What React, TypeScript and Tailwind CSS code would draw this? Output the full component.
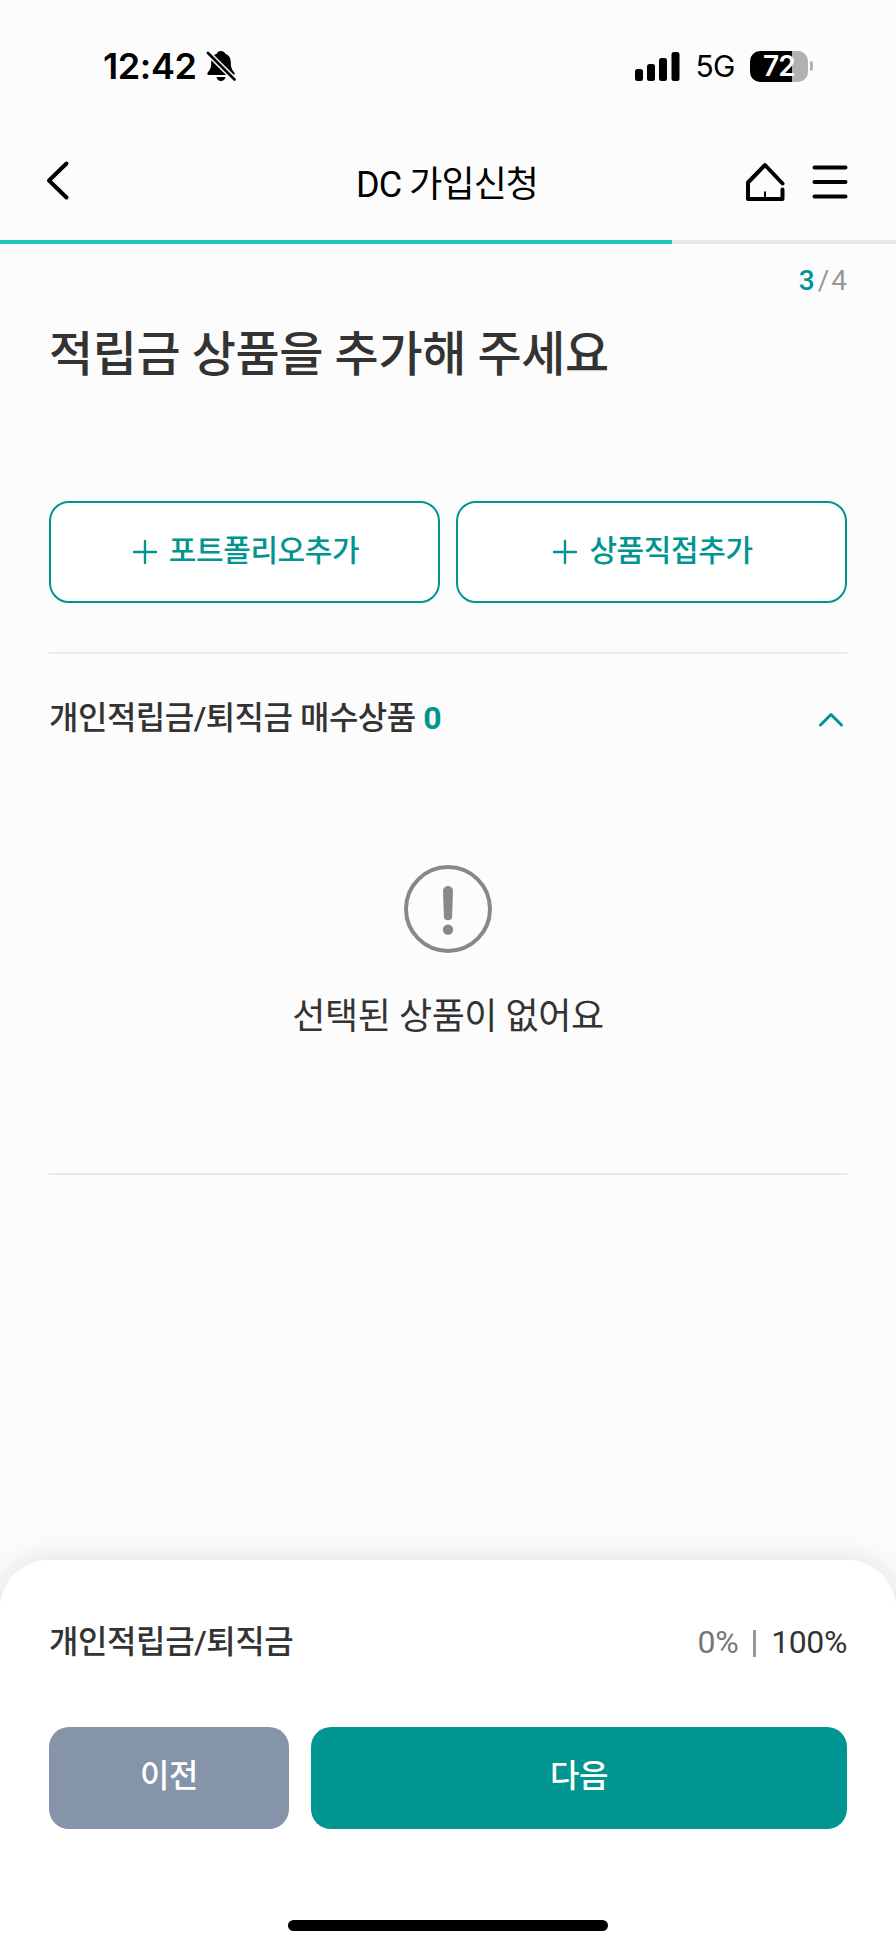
import type { ReactNode } from 'react'

export default function App() {
  return (
    <div className="flex h-[1947px] w-[896px] flex-col overflow-hidden bg-[#fcfcfc] font-[Roboto,'Noto_Sans_CJK_KR',sans-serif] tracking-[-0.4px] text-[#333333]">
      <StatusBar />
      <Header />
      <Progress step={3} total={4} />

      <main className="flex flex-1 flex-col px-[49px]">
        <p className="mt-[19px] flex h-9 items-center justify-end text-[28px] leading-9 tracking-normal text-[#999999]">
          <span className="font-medium text-[#009591]">3</span>
          <span className="mr-[2px] ml-[3px]">/</span>
          <span>4</span>
        </p>

        <h1 className="mt-[20px] text-[48px] leading-[72px] font-medium">
          적립금 상품을 추가해 주세요
        </h1>

        <div className="mt-[110px] grid grid-cols-2 gap-4">
          <AddButton label="포트폴리오추가" />
          <AddButton label="상품직접추가" />
        </div>

        <section className="mt-[49px] flex h-[523px] flex-col border-y-2 border-[#e9eaed]">
          <div className="mt-[40px] flex h-12 items-center justify-between">
            <h2 className="text-[32px] leading-[48px] font-medium tracking-[-0.5px]">
              개인적립금/퇴직금 매수상품 <span className="font-bold text-[#009591]">0</span>
            </h2>
            <svg width="32" height="32" viewBox="0 0 32 32" fill="none" className="mt-1">
              <path d="M5.500 21 16 10.500 26.500 21" stroke="#009591" strokeWidth="3" strokeLinecap="round" strokeLinejoin="round" />
            </svg>
          </div>

          <div className="mt-[123px] flex flex-col items-center">
            <svg width="88" height="88" viewBox="0 0 88 88">
              <circle cx="44" cy="44" r="42" fill="none" stroke="#888888" strokeWidth="4" />
              <path d="M39 26a5 5 0 0 1 10 0l-.9 25.200a4.100 4.100 0 0 1-8.200 0z" fill="#888888" />
              <circle cx="44" cy="64.600" r="5.200" fill="#888888" />
            </svg>
            <p className="mt-[37px] text-[36px] leading-[54px]">선택된 상품이 없어요</p>
          </div>
        </section>
      </main>

      <footer className="flex h-[387px] flex-col rounded-t-[48px] bg-white px-[49px] shadow-[0_0_32px_rgba(0,0,0,0.12)]">
        <div className="mt-[58px] flex h-12 items-center justify-between text-[32px] leading-[48px]">
          <p className="font-medium">개인적립금/퇴직금</p>
          <p className="flex items-center">
            <span className="text-[#777777]">0%</span>
            <span className="mx-[15px] mt-[3px] h-[27px] w-[3px] bg-[#999999]" />
            <span>100%</span>
          </p>
        </div>

        <div className="mt-[61px] flex gap-[22px] text-[32px] leading-[48px] font-medium text-white">
          <button className="h-[102px] w-[240px] rounded-[20px] bg-[#8594a8] pb-1">이전</button>
          <button className="h-[102px] flex-1 rounded-[20px] bg-[#009591] pb-1">다음</button>
        </div>

        <div className="mt-[91px] h-[11px] w-80 self-center rounded-full bg-black" />
      </footer>
    </div>
  )
}

function StatusBar() {
  return (
    <div className="flex h-[132px] items-center justify-between pr-[83px] pl-[103px] font-[Inter,sans-serif] text-black">
      <div className="flex items-center gap-[9px]">
        <span className="text-[36px] leading-[44px] font-semibold tracking-[-0.4px]">12:42</span>
        <BellOff />
      </div>

      <div className="flex items-center">
        <svg width="45" height="29" viewBox="0 0 45 29">
          <rect x="0" y="17" width="8" height="12" rx="2.500" />
          <rect x="12" y="12" width="8" height="17" rx="2.500" />
          <rect x="24" y="6" width="8" height="23" rx="2.500" />
          <rect x="36.500" y="0" width="8" height="29" rx="2.500" />
        </svg>
        <span className="ml-[15px] text-[30px] leading-9 tracking-[-0.5px]">5G</span>
        <div className="ml-[15px] flex items-center gap-[2px]">
          <div className="flex h-[31px] w-[58px] items-center justify-center rounded-[10px] bg-[linear-gradient(to_right,#000_42px,#b0b2b1_42px)]">
            <span className="text-[28px] leading-[31px] font-semibold tracking-[-0.8px] text-white">72</span>
          </div>
          <div className="h-[10px] w-[3px] rounded-r-full bg-[#b0b2b1]" />
        </div>
      </div>
    </div>
  )
}

function BellOff() {
  return (
    <svg width="30" height="32" viewBox="0 0 30 32" fill="none">
      <path
        d="M15 1c-2 0-3.600 1-4.300 2.700-3.800 1.300-5.500 4.500-5.500 8.300 0 5.500-1 7.500-3 9.800C.800 23.500 1 25 2.800 25h24.400c1.800 0 2-1.500.600-3.200-2-2.300-3-4.300-3-9.800 0-3.800-1.700-7-5.500-8.300C18.600 2 17 1 15 1zM10.500 27h9c-.5 2.500-2.200 4-4.500 4s-4-1.500-4.500-4z"
        fill="black"
      />
      <path d="M1.500 2.500 28.500 29.500" stroke="#fcfcfc" strokeWidth="5.500" />
      <path d="M2 3 28.500 29.500" stroke="black" strokeWidth="2.600" strokeLinecap="round" />
    </svg>
  )
}

function Header() {
  return (
    <header className="grid h-[108px] grid-cols-[1fr_auto_1fr] items-center pr-[47px] pl-[45px] text-black">
      <svg width="28" height="44" viewBox="0 0 28 44" fill="none" className="-mt-[12px]">
        <path d="M21.500 5.500 4 22.500l17.500 17" stroke="black" strokeWidth="4" strokeLinecap="round" strokeLinejoin="round" />
      </svg>
      <h1 className="-mt-[2px] text-[36px] leading-[54px] tracking-[-0.9px]">DC 가입신청</h1>
      <div className="-mt-[11px] flex items-center justify-end gap-[25px]">
        <svg width="42" height="44" viewBox="0 0 42 44" fill="none">
          <path d="M38.500 24.500 21 6 4 23.500V40h34.500v-9.500" stroke="black" strokeWidth="4" strokeLinecap="round" strokeLinejoin="round" />
          <path d="M21 32.500V39" stroke="black" strokeWidth="2" />
        </svg>
        <svg width="38" height="44" viewBox="0 0 38 44" fill="none">
          <path d="M3.500 8.500h31M3.500 23h31M3.500 37.500h31" stroke="black" strokeWidth="4" strokeLinecap="round" />
        </svg>
      </div>
    </header>
  )
}

function Progress({ step, total }: { step: number; total: number }) {
  return (
    <div className="h-1 w-full bg-[#e8e8ec]">
      <div className="h-full bg-[#1ec8b9]" style={{ width: `${(step / total) * 100}%` }} />
    </div>
  )
}

function AddButton({ label }: { label: ReactNode }) {
  return (
    <button className="flex h-[102px] items-center justify-center gap-[11px] rounded-[20px] border-2 border-[#009591] bg-white pb-1 pl-[2px] text-[30px] leading-[45px] font-medium text-[#009591]">
      <svg width="26" height="26" viewBox="0 0 26 26" fill="none" className="mt-[3px]">
        <path d="M13 2v22M2 13h22" stroke="currentColor" strokeWidth="2.400" strokeLinecap="round" />
      </svg>
      <span>{label}</span>
    </button>
  )
}
